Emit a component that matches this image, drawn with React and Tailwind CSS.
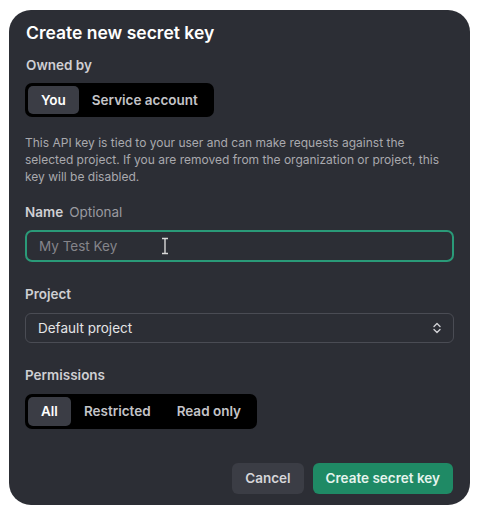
import React, { useState } from 'react';

const font = { fontFamily: 'Inter, "Noto Sans", sans-serif' };

function Segmented({ options, value, onChange }) {
  return (
    <div className="flex items-stretch bg-black rounded-[7px] p-[3px]">
      {options.map((opt) => (
        <button
          key={opt}
          onClick={() => onChange(opt)}
          className={`px-[13px] text-[13.5px] font-semibold rounded-[5px] ${
            value === opt ? 'bg-[#3b3d45] text-white' : 'text-[#c4c4c8]'
          }`}
        >
          {opt}
        </button>
      ))}
    </div>
  );
}

export default function App() {
  const [owner, setOwner] = useState('You');
  const [perm, setPerm] = useState('All');

  return (
    <div className="w-[480px] h-[516px] bg-white pl-[9px] pt-[10px]" style={font}>
      <div className="w-[461px] h-[495px] bg-[#2c2e35] rounded-[22px] px-[16px] pt-[12px] flex flex-col">
        <h1 className="text-[17.5px] leading-[22px] font-semibold text-white ml-px">Create new secret key</h1>

        {/* Owned by */}
        <p className="mt-[12px] text-[13.5px] leading-[18px] font-semibold text-[#cfcfd3] ml-px">Owned by</p>
        <div className="mt-[9px] flex">
          <div className="h-[34px] flex">
            <Segmented options={['You', 'Service account']} value={owner} onChange={setOwner} />
          </div>
        </div>

        <p className="mt-[17px] text-[12px] leading-[17px] text-[#a9a9ae] pr-[10px]">
          This API key is tied to your user and can make requests against the selected project. If you are removed from the organization or project, this key will be disabled.
        </p>

        {/* Name */}
        <p className="mt-[18px] text-[13.5px] leading-[18px] text-[#cfcfd3]">
          <span className="font-semibold">Name</span>
          <span className="ml-[6px] text-[#9a9aa0]">Optional</span>
        </p>
        <div className="relative mt-[9px]">
          <input
            placeholder="My Test Key"
            className="w-full h-[32px] rounded-[7px] border-2 border-[#2a9a78] bg-transparent px-[12px] text-[13.5px] text-white placeholder:text-[#85858b] outline-none"
          />
          <svg className="absolute left-[136px] top-[7px]" width="8" height="18" viewBox="0 0 8 18" fill="none">
            <path d="M1 1.5h6M1 16.5h6M4 1.5v15" stroke="#d8d8d8" strokeWidth="1.4" />
          </svg>
        </div>

        {/* Project */}
        <p className="mt-[23px] text-[13.5px] leading-[18px] font-semibold text-[#cfcfd3]">Project</p>
        <button className="mt-[10px] h-[30px] w-full flex items-center justify-between rounded-[6px] border border-[#4a4c54] px-[12px] text-[13.5px] text-[#e4e4e6]">
          <span>Default project</span>
          <svg width="8" height="12" viewBox="0 0 8 12" fill="none">
            <path d="M1 4.5L4 1.5l3 3M1 7.5l3 3 3-3" stroke="#d0d0d4" strokeWidth="1.4" strokeLinecap="round" strokeLinejoin="round" />
          </svg>
        </button>

        {/* Permissions */}
        <p className="mt-[23px] text-[13.5px] leading-[18px] font-semibold text-[#cfcfd3]">Permissions</p>
        <div className="mt-[10px] flex">
          <div className="h-[35px] flex">
            <Segmented options={['All', 'Restricted', 'Read only']} value={perm} onChange={setPerm} />
          </div>
        </div>

        {/* Actions */}
        <div className="mt-[34px] flex justify-end gap-[9px] pr-px">
          <button className="h-[31px] px-[13px] rounded-[6px] bg-[#3b3d45] text-[13.5px] font-semibold text-[#d6d6da]">Cancel</button>
          <button className="h-[31px] px-[13px] rounded-[6px] bg-[#1f8a65] text-[13.5px] font-semibold text-[#e6f4ee]">Create secret key</button>
        </div>
      </div>
    </div>
  );
}
